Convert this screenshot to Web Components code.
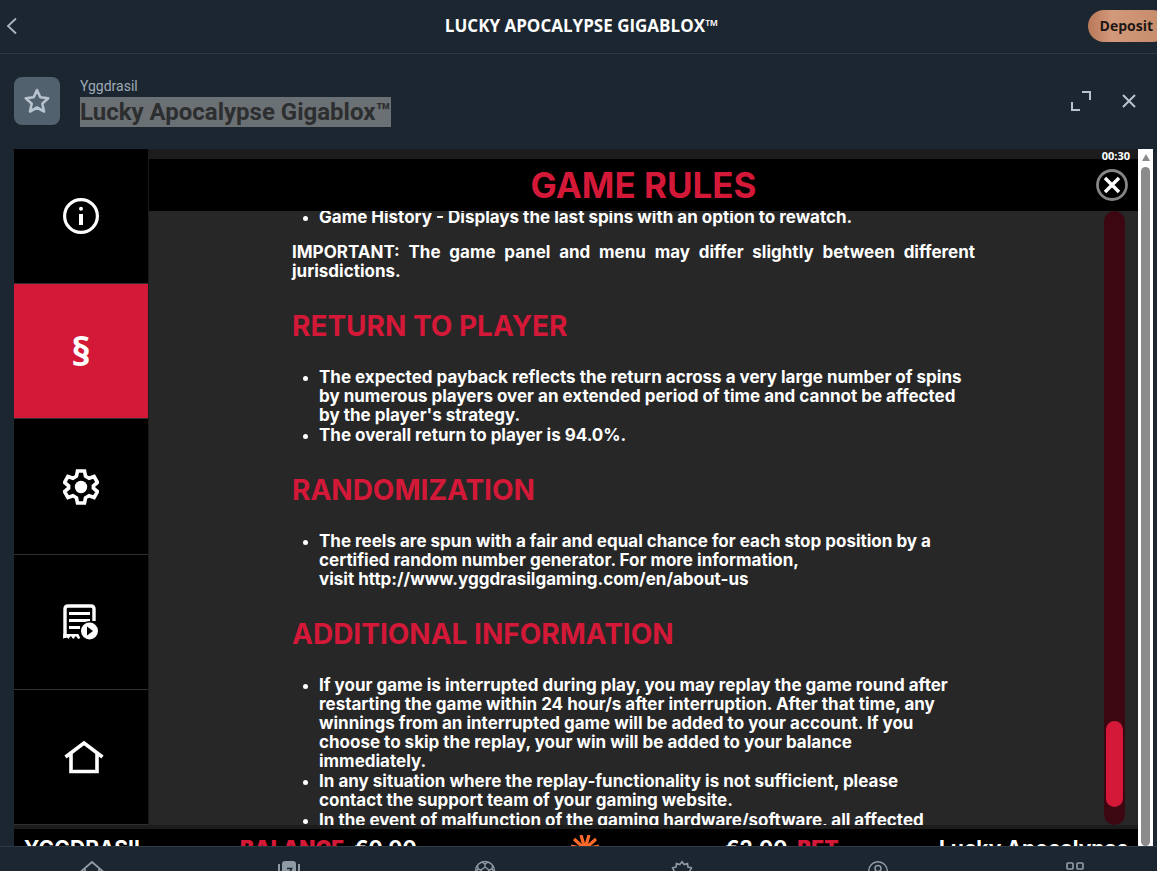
<!DOCTYPE html>
<html lang="en">
<head>
<meta charset="utf-8">
<meta name="viewport" content="width=device-width, initial-scale=1">
<title>Lucky Apocalypse Gigablox</title>
<style>
    html, body { margin: 0; height: 100%; }
    body { background: #1c2630; overflow: hidden; }
</style>
</head>
<body>
<casino-app></casino-app>

<script>
// icon set: [viewBox, markup], strokes and fills use currentColor
const ICONS = {
    back: ['0 0 12 18', '<path d="M10 1.5L2 9l8 7.5" fill="none" stroke="currentColor" stroke-width="1.8"/>'],
    star: ['0 0 26 26', '<path d="M13 2l3.3 7.3 7.9.9-5.9 5.4 1.7 7.9-7-4-7 4 1.7-7.9L1.8 10.2l7.9-.9z" fill="none" stroke="currentColor" stroke-width="2.6" stroke-linejoin="round"/>'],
    expand: ['0 0 22 22', '<path d="M12 2h8v8M2 12v8h8" fill="none" stroke="currentColor" stroke-width="2"/>'],
    close: ['0 0 16 16', '<path d="M2 2l12 12M14 2L2 14" fill="none" stroke="currentColor" stroke-width="2"/>'],
    closeRound: ['0 0 32 32', '<circle cx="16" cy="16" r="14.5" fill="#000" stroke="#858585" stroke-width="2.8"/><path d="M9 9l14 14M23 9L9 23" fill="none" stroke="currentColor" stroke-width="3.4"/>'],
    info: ['0 0 36 36', '<circle cx="18" cy="18" r="16.4" fill="none" stroke="currentColor" stroke-width="3.2"/><circle cx="18" cy="10.7" r="2" fill="currentColor"/><path d="M18 16v11" stroke="currentColor" stroke-width="4"/>'],
    gear: ['0 0 36 36', '<path d="M14.5 2h7l1 5.200 3.600 2 5-1.700 3.300 5.900-4 3.500v2.200l4 3.500-3.300 5.900-5-1.700-3.600 2-1 5.200h-7l-1-5.200-3.600-2-5 1.700-3.300-5.900 4-3.500v-2.200l-4-3.500 3.300-5.900 5 1.700 3.600-2z" fill="none" stroke="currentColor" stroke-width="3.6"/><circle cx="18" cy="18" r="6.2" fill="currentColor"/>'],
    history: ['0 0 36 36', '<path d="M2 34V5q0-3 3-3h23q3 0 3 3v12" fill="none" stroke="currentColor" stroke-width="3.4"/><path d="M6 9.500h21M6 16.500h21M6 23.500h11" stroke="currentColor" stroke-width="3.2"/><path d="M0.300 30h15l2 4-2 1-2.500-3-2.500 3-2.500-3-2.500 3L3 32l-2.700 3z" fill="currentColor"/><circle cx="26.500" cy="27" r="10" fill="#000"/><circle cx="26.500" cy="27" r="8.500" fill="currentColor"/><path d="M24 22.500v9l6-4.500z" fill="#000"/>'],
    house: ['-6 0 46 34', '<path d="M1.500 17L20 3l18.500 14M7 14v17.500h26V14" fill="none" stroke="currentColor" stroke-width="3.6"/>'],
    navHome: ['0 0 24 24', '<path d="M1 12.500L12 3l11 9.500M5 10v12h14V10" fill="none" stroke="currentColor" stroke-width="1.8"/>'],
    navSlots: ['0 0 24 24', '<path d="M2 5v15M22 5v15" stroke="currentColor" stroke-width="2"/><rect x="5" y="2" width="14" height="21" rx="3" fill="currentColor"/><path d="M10 9.500h4.500l-2.500 6" fill="none" stroke="#1c2630" stroke-width="1.6"/>'],
    navBall: ['0 0 24 24', '<circle cx="12" cy="12" r="9.500" fill="none" stroke="currentColor" stroke-width="1.5"/><path d="M12 8l4 3-1.500 4.800h-5L8 11zM12 8V5M9 3l3 2.200L15 3M16 11l3-1M8 11l-3-1M3 13l2-3-.5-3.500M21 13l-2-3 .5-3.500" fill="none" stroke="currentColor" stroke-width="1.4"/>'],
    navPromo: ['0 0 24 24', '<path d="M9.800 5.500L12 2.800l2.200 2.700 3.300-1 .5 3.500 3.400.8-1.500 3.200 1.500 3.200-3.400.8-.5 3.500-3.300-1L12 21.200l-2.200-2.700-3.300 1-.5-3.500-3.400-.8L4.100 12 2.600 8.800 6 8l.5-3.500z" fill="none" stroke="currentColor" stroke-width="1.6"/>'],
    navUser: ['0 0 24 24', '<circle cx="12" cy="12" r="9.300" fill="none" stroke="currentColor" stroke-width="1.5"/><circle cx="12" cy="9.500" r="3" fill="none" stroke="currentColor" stroke-width="1.5"/><path d="M6 18q1-5 6-5t6 5" fill="none" stroke="currentColor" stroke-width="1.5"/>'],
    navMore: ['0 0 24 24', '<g fill="none" stroke="currentColor" stroke-width="1.7"><rect x="4" y="4" width="6" height="6" rx="1"/><rect x="14" y="4" width="6" height="6" rx="1"/><rect x="4" y="14" width="6" height="6" rx="1"/><rect x="14" y="14" width="6" height="6" rx="1"/></g>'],
    burst: ['0 0 28 28', '<g stroke="#ff6a2b" stroke-width="3.2"><path d="M14 14L10 0M14 14l4-14M14 14L3 4M14 14L0 11M14 14L25 4M14 14l14-3M14 14L1 18M14 14l12 7M14 14l3 13M14 14l-7 11"/></g>']
};

// svg icon, sized by its width / height attributes
class GameIcon extends HTMLElement {
    constructor() {
        super();
        this.attachShadow({mode: 'open'});
    }

    connectedCallback() {
        const [box, markup] = ICONS[this.getAttribute('name')];
        const w = this.getAttribute('width') || '24';
        const h = this.getAttribute('height') || w;
        this.shadowRoot.innerHTML = `
            <style>
                :host { display: block; flex: none; }
                svg { display: block; }
            </style>
            <svg width="${w}" height="${h}" viewBox="${box}" aria-hidden="true">${markup}</svg>
        `;
    }
}

class TopBar extends HTMLElement {
    constructor() {
        super();
        this.attachShadow({mode: 'open'});
        this.shadowRoot.innerHTML = `
            <style>
                :host { display: block; flex: none; border-bottom: 1px solid #2e3b47; }
                header {
                    display: grid;
                    grid-template-columns: 1fr auto 1fr;
                    align-items: center;
                    height: 51px;
                    padding: 0 0 2px 6px;
                }
                button { border: 0; background: none; padding: 0; font: inherit; }
                .back { color: #a9b6c0; justify-self: start; }
                h1 {
                    margin: 0;
                    color: #fff;
                    font: 700 17px/24px "Open Sans", sans-serif;
                }
                .deposit {
                    justify-self: end;
                    height: 32px;
                    padding: 0 16px 0 12px;
                    margin-right: -12px;
                    border-radius: 16px;
                    background: linear-gradient(90deg, #b9785a, #d2997a 30%, #c48a69);
                    color: #1d1715;
                    font: 700 14px/20px "Open Sans", sans-serif;
                }
            </style>
            <header>
                <button class="back" aria-label="Back"><game-icon name="back" width="12" height="18"></game-icon></button>
                <h1><slot></slot></h1>
                <button class="deposit">Deposit</button>
            </header>
        `;
    }
}

class GameTitle extends HTMLElement {
    constructor() {
        super();
        this.attachShadow({mode: 'open'});
    }

    connectedCallback() {
        this.shadowRoot.innerHTML = `
            <style>
                :host {
                    display: flex;
                    flex: none;
                    align-items: center;
                    height: 93px;
                    padding: 0 20px 2px 14px;
                }
                button { border: 0; background: none; padding: 0; color: #b7c4ce; }
                .fav {
                    display: grid;
                    place-items: center;
                    width: 46px;
                    height: 48px;
                    border-radius: 8px;
                    background: #51616e;
                    margin-right: 20px;
                }
                .names { flex: 1; }
                p { margin: 0; font: 400 14px/22px Roboto, sans-serif; color: #9eabb5; }
                h2 { margin: 0; font: 700 24px/30px Roboto, sans-serif; color: #2c2e30; }
                mark { display: inline-block; background: #6b7074; color: inherit; }
                .expand { margin-right: 29px; }
            </style>
            <button class="fav" aria-label="Add to favourites"><game-icon name="star" width="26"></game-icon></button>
            <div class="names">
                <p>${this.getAttribute('provider')}</p>
                <h2><mark>${this.getAttribute('name')}</mark></h2>
            </div>
            <button class="expand" aria-label="Full screen"><game-icon name="expand" width="22"></game-icon></button>
            <button aria-label="Close game"><game-icon name="close" width="16"></game-icon></button>
        `;
    }
}

class GameMenu extends HTMLElement {
    constructor() {
        super();
        this.attachShadow({mode: 'open'});
        this.shadowRoot.innerHTML = `
            <style>
                :host { display: block; width: 134px; flex: none; border-right: 1px solid #1b1b1b; }
                nav { display: flex; flex-direction: column; height: 100%; }
                button {
                    flex: 1;
                    display: grid;
                    place-items: center;
                    padding: 0;
                    border: 0;
                    border-bottom: 1px solid #303030;
                    background: #000;
                    color: #fff;
                    font: 700 40px/44px "Open Sans", sans-serif;
                }
                .active { background: #d41838; }
            </style>
            <nav>
                <button aria-label="Info"><game-icon name="info" width="36"></game-icon></button>
                <button class="active" aria-label="Game rules">§</button>
                <button aria-label="Settings"><game-icon name="gear" width="36"></game-icon></button>
                <button aria-label="History"><game-icon name="history" width="36"></game-icon></button>
                <button aria-label="Home"><game-icon name="house" width="46" height="34"></game-icon></button>
            </nav>
        `;
    }
}

class RulesPanel extends HTMLElement {
    constructor() {
        super();
        this.attachShadow({mode: 'open'});
        this.shadowRoot.innerHTML = `
            <style>
                :host {
                    display: flex;
                    flex-direction: column;
                    flex: 1;
                    min-width: 0;
                    position: relative;
                    background: #272727;
                    border-top: 10px solid #1c1c1d;
                    box-sizing: border-box;
                    color: #fff;
                    font: 700 17px/19px Inter, sans-serif;
                }
                header {
                    display: flex;
                    align-items: center;
                    height: 52px;
                    flex: none;
                    background: #000;
                    padding: 0 10px 0 42px;
                }
                h2 {
                    flex: 1;
                    margin: 0;
                    text-align: center;
                    color: #d41838;
                    font-size: 35px;
                    line-height: 40px;
                }
                button { border: 0; background: none; padding: 0; color: #fff; }
                time {
                    position: absolute;
                    top: -9px;
                    right: 8px;
                    font: 700 11px/12px "Open Sans", sans-serif;
                }
                .body { display: flex; flex: 1; min-height: 0; padding-right: 13px; }
                .scroll { flex: 1; overflow: hidden; padding-left: 14px; }
                .text { max-width: 683px; margin: -3px auto 0; }
                .rail {
                    width: 21px;
                    box-sizing: border-box;
                    border-radius: 11px;
                    background: #3c0711;
                    padding: 0 2px 18px;
                    display: flex;
                    align-items: flex-end;
                }
                .thumb { width: 100%; height: 86px; border-radius: 9px; background: #d41838; }
            </style>
            <header>
                <h2>GAME RULES</h2>
                <button aria-label="Close rules"><game-icon name="closeRound" width="32"></game-icon></button>
            </header>
            <time>00:30</time>
            <div class="body">
                <div class="scroll"><div class="text"><slot></slot></div></div>
                <div class="rail"><div class="thumb"></div></div>
            </div>
        `;
    }
}

// heading plus body of one rules chapter
class RulesSection extends HTMLElement {
    constructor() {
        super();
        this.attachShadow({mode: 'open'});
    }

    connectedCallback() {
        const title = this.getAttribute('title-text');
        this.shadowRoot.innerHTML = `
            <style>
                :host { display: block; }
                h3 {
                    margin: 0;
                    padding: 28px 0 25px;
                    color: #d41838;
                    font-size: 28px;
                    line-height: 34px;
                }
            </style>
            ${title ? `<h3>${title}</h3>` : ''}
            <slot></slot>
        `;
    }
}

class GameFooter extends HTMLElement {
    constructor() {
        super();
        this.attachShadow({mode: 'open'});
        this.shadowRoot.innerHTML = `
            <style>
                :host {
                    display: grid;
                    grid-template-columns: 216fr 331fr 154fr 214fr 199fr;
                    flex: none;
                    height: 17px;
                    overflow: hidden;
                    box-sizing: border-box;
                    padding: 6px 0 0 10px;
                    background: #000;
                    color: #fff;
                    font: 700 21px/28px Inter, sans-serif;
                    white-space: nowrap;
                }
                b { color: #d41838; }
                .pair { display: flex; gap: 10px; }
            </style>
            <span>YGGDRASIL</span>
            <span class="pair"><b>BALANCE</b><span>€0.00</span></span>
            <game-icon name="burst" width="28"></game-icon>
            <span class="pair"><span>€2.00</span><b>BET</b></span>
            <span>Lucky Apocalypse</span>
        `;
    }
}

class FrameScrollbar extends HTMLElement {
    constructor() {
        super();
        this.attachShadow({mode: 'open'});
        this.shadowRoot.innerHTML = `
            <style>
                :host {
                    display: flex;
                    flex-direction: column;
                    align-items: center;
                    width: 15px;
                    flex: none;
                    background: #fff;
                }
                .arrow {
                    margin: 5px 0 6px;
                    border: 4px solid transparent;
                    border-top: 0;
                    border-bottom: 7px solid #8a8a8a;
                }
                .thumb { flex: 1; width: 9px; border-radius: 5px; background: #8b8b8b; }
            </style>
            <div class="arrow"></div>
            <div class="thumb"></div>
        `;
    }
}

class BottomNav extends HTMLElement {
    constructor() {
        super();
        this.attachShadow({mode: 'open'});
        const links = [
            ['Home', 'navHome'], ['Slots', 'navSlots'], ['Sports', 'navBall'],
            ['Promotions', 'navPromo'], ['Account', 'navUser'], ['More', 'navMore']
        ];
        this.shadowRoot.innerHTML = `
            <style>
                :host { display: block; flex: none; border-top: 1px solid #2e3b47; }
                nav { display: flex; height: 24px; margin: 0 -16px 0 -6px; overflow: hidden; }
                a { flex: 1; display: flex; justify-content: center; padding-top: 12px; color: #8e9aa5; }
            </style>
            <nav>${links.map(([label, icon]) => `
                <a href="#" aria-label="${label}"><game-icon name="${icon}" width="24"></game-icon></a>`).join('')}
            </nav>
        `;
    }
}

class CasinoApp extends HTMLElement {
    constructor() {
        super();
        this.attachShadow({mode: 'open'});
        this.shadowRoot.innerHTML = `
            <style>
                :host { display: flex; flex-direction: column; height: 100vh; overflow: hidden; }
                .frame { display: flex; flex: 1; min-height: 0; padding: 0 4px 0 14px; }
                .game { display: flex; flex-direction: column; flex: 1; min-width: 0; background: #1c1c1d; }
                .panels { display: flex; flex: 1; min-height: 0; padding-bottom: 4px; }
                p { margin: 16px 0 0; text-align: justify; }
                ul { margin: 0; padding-left: 27px; display: grid; row-gap: 1px; }
                li { white-space: nowrap; }
                li::marker { font-size: 14px; }
            </style>
            <top-bar>LUCKY APOCALYPSE GIGABLOX™</top-bar>
            <game-title provider="Yggdrasil" name="Lucky Apocalypse Gigablox™"></game-title>
            <div class="frame">
                <div class="game">
                    <div class="panels">
                        <game-menu></game-menu>
                        <rules-panel>
                            <rules-section>
                                <ul><li>Game History - Displays the last spins with an option to rewatch.</li></ul>
                                <p>IMPORTANT: The game panel and menu may differ slightly between different jurisdictions.</p>
                            </rules-section>
                            <rules-section title-text="RETURN TO PLAYER">
                                <ul>
                                    <li>The expected payback reflects the return across a very large number of spins<br>by numerous players over an extended period of time and cannot be affected<br>by the player's strategy.</li>
                                    <li>The overall return to player is 94.0%.</li>
                                </ul>
                            </rules-section>
                            <rules-section title-text="RANDOMIZATION">
                                <ul>
                                    <li>The reels are spun with a fair and equal chance for each stop position by a<br>certified random number generator. For more information,<br>visit http://www.yggdrasilgaming.com/en/about-us</li>
                                </ul>
                            </rules-section>
                            <rules-section title-text="ADDITIONAL INFORMATION">
                                <ul>
                                    <li>If your game is interrupted during play, you may replay the game round after<br>restarting the game within 24 hour/s after interruption. After that time, any<br>winnings from an interrupted game will be added to your account. If you<br>choose to skip the replay, your win will be added to your balance<br>immediately.</li>
                                    <li>In any situation where the replay-functionality is not sufficient, please<br>contact the support team of your gaming website.</li>
                                    <li>In the event of malfunction of the gaming hardware/software, all affected</li>
                                </ul>
                            </rules-section>
                        </rules-panel>
                    </div>
                    <game-footer></game-footer>
                </div>
                <frame-scrollbar></frame-scrollbar>
            </div>
            <bottom-nav></bottom-nav>
        `;
    }
}

customElements.define('game-icon', GameIcon);
customElements.define('top-bar', TopBar);
customElements.define('game-title', GameTitle);
customElements.define('game-menu', GameMenu);
customElements.define('rules-panel', RulesPanel);
customElements.define('rules-section', RulesSection);
customElements.define('game-footer', GameFooter);
customElements.define('frame-scrollbar', FrameScrollbar);
customElements.define('bottom-nav', BottomNav);
customElements.define('casino-app', CasinoApp);
</script>
</body>
</html>
